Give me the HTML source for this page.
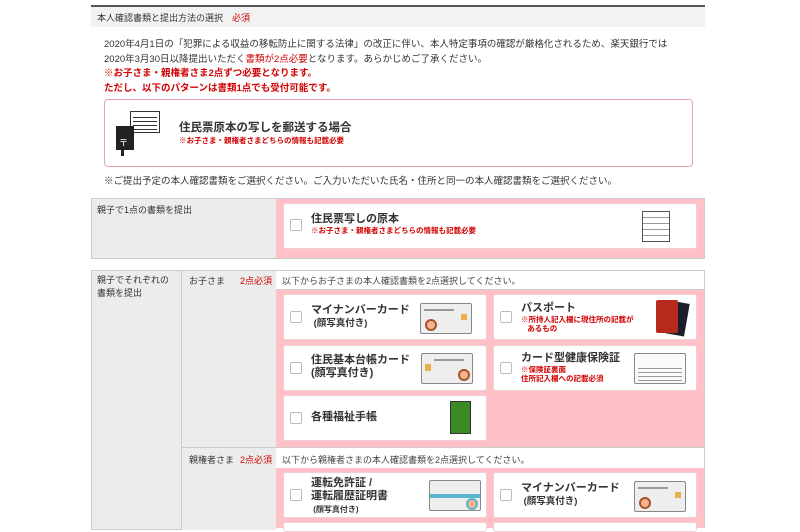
<!DOCTYPE html>
<html><head><meta charset="utf-8"><style>
*{margin:0;padding:0;box-sizing:border-box}
body{width:800px;height:527px;overflow:hidden;background:#fff;font-family:"Liberation Sans","Noto Sans CJK JP",sans-serif;color:#333;position:relative}
.a{position:absolute;white-space:nowrap}
.r{color:#d10000}
.card{position:absolute;background:#fff;border-radius:3px;border:1px solid #f0d0d4}
.cb{position:absolute;left:6px;width:12px;height:12px;border:1px solid #bbb;border-radius:2px;background:#fff}
.t{position:absolute;font-size:11px;font-weight:bold;color:#333;line-height:13px}
.s{font-size:7.5px;color:#d10000;font-weight:bold;line-height:9px}
.gray{position:absolute;background:#ececec}
.pink{position:absolute;background:#ffc0c8}
.idc{position:absolute;width:52px;height:31px;background:#eee;border:1px solid #888;border-radius:2px;overflow:hidden}
.face{position:absolute;width:12px;height:12px;border-radius:50%;background:#f6b38e;border:2px solid #a5532d}
.ln{position:absolute;height:2px;background:#999}
</style></head><body>
<div class="a" style="left:91px;top:5px;width:614px;height:2px;background:#555"></div>
<div class="a" style="left:91px;top:7px;width:614px;height:20px;background:#f2f2f2"></div>
<div class="a" style="left:97px;top:11px;font-size:9px;color:#333">本人確認書類と提出方法の選択　<span class="r">必須</span></div>
<div class="a" style="left:104px;top:38px;font-size:9.5px;line-height:14.5px;color:#333">2020年4月1日の「犯罪による収益の移転防止に関する法律」の改正に伴い、本人特定事項の確認が厳格化されるため、楽天銀行では<br>2020年3月30日以降提出いただく<span class="r">書類が2点必要</span>となります。あらかじめご了承ください。<br><b class="r">※お子さま・親権者さま2点ずつ必要となります。</b><br><b class="r">ただし、以下のパターンは書類1点でも受付可能です。</b></div>
<div class="a" style="left:104px;top:99px;width:589px;height:68px;border:1px solid #e8a4a8;border-radius:4px"></div>
<div class="a" style="left:130px;top:111px;width:30px;height:22px;background:#fff;border:1px solid #333"></div>
<div class="a" style="left:133px;top:117px;width:24px;height:1px;background:#333;box-shadow:0 4px 0 #333,0 8px 0 #333,0 12px 0 #333"></div>
<div class="a" style="left:116px;top:126px;width:18px;height:24px;background:#222"></div>
<div class="a" style="left:121px;top:150px;width:3px;height:6px;background:#222"></div>
<div class="a" style="left:119px;top:136px;color:#fff;font-size:9px">〒</div>
<div class="a" style="left:179px;top:119px;font-size:11.5px;font-weight:bold">住民票原本の写しを郵送する場合</div>
<div class="a s" style="left:179px;top:136px">※お子さま・親権者さまどちらの情報も記載必要</div>
<div class="a" style="left:104px;top:173px;font-size:9.5px">※ご提出予定の本人確認書類をご選択ください。ご入力いただいた氏名・住所と同一の本人確認書類をご選択ください。</div>

<div class="gray" style="left:91px;top:198px;width:185px;height:61px;border:1px solid #ccc;border-right:none"></div>
<div class="pink" style="left:276px;top:198px;width:429px;height:61px;border:1px solid #ccc;border-left:none"></div>
<div class="a" style="left:97px;top:203px;font-size:9px">親子で1点の書類を提出</div>
<div class="card" style="left:283px;top:203px;width:414px;height:46px">
<div class="cb" style="top:15px"></div>
<div class="t" style="left:27px;top:9px">住民票写しの原本<div class="s">※お子さま・親権者さまどちらの情報も記載必要</div></div>
<div class="a" style="left:358px;top:7px;width:28px;height:31px;border:1px solid #555;background:repeating-linear-gradient(#fff 0 5px,#999 5px 6px)"></div>
</div>

<div class="gray" style="left:91px;top:270px;width:91px;height:260px;border:1px solid #ccc"></div>
<div class="gray" style="left:182px;top:270px;width:94px;height:260px;border-top:1px solid #ccc"></div>
<div class="a" style="left:97px;top:274px;font-size:9px;line-height:13px">親子でそれぞれの<br>書類を提出</div>
<div class="a" style="left:189px;top:274px;font-size:9px">お子さま</div>
<div class="a r" style="left:240px;top:274px;font-size:9px">2点必須</div>
<div class="a" style="left:276px;top:270px;width:429px;height:20px;background:#fff;border:1px solid #ccc;border-left:none"></div>
<div class="a" style="left:282px;top:274px;font-size:9px;color:#444">以下からお子さまの本人確認書類を2点選択してください。</div>
<div class="pink" style="left:276px;top:290px;width:429px;height:158px;border-right:1px solid #ccc"></div>
<div class="a" style="left:182px;top:447px;width:523px;height:1px;background:#ccc"></div>
<div class="a" style="left:189px;top:453px;font-size:9px">親権者さま</div>
<div class="a r" style="left:240px;top:453px;font-size:9px">2点必須</div>
<div class="a" style="left:276px;top:448px;width:429px;height:20px;background:#fff;border-right:1px solid #ccc"></div>
<div class="a" style="left:282px;top:453px;font-size:9px;color:#444">以下から親権者さまの本人確認書類を2点選択してください。</div>
<div class="pink" style="left:276px;top:468px;width:429px;height:60px;border-right:1px solid #ccc"></div>

<div class="card" style="left:283px;top:294px;width:204px;height:46px"><div class="cb" style="top:16px"></div>
<div class="t" style="left:27px;top:9px">マイナンバーカード<br><span style="font-size:9.5px">&nbsp;(顔写真付き)</span></div>
<div class="idc" style="left:136px;top:8px"><div class="ln" style="left:3px;top:5px;width:30px"></div><div class="face" style="left:4px;top:15px"></div><div class="a" style="left:40px;top:10px;width:6px;height:6px;background:#e8b04a"></div></div></div>
<div class="card" style="left:493px;top:294px;width:204px;height:46px"><div class="cb" style="top:16px"></div>
<div class="t" style="left:27px;top:7px">パスポート<div class="s">※所持人記入欄に現住所の記載が<br>&nbsp;&nbsp;&nbsp;あるもの</div></div>
<div class="a" style="left:173px;top:7px;width:20px;height:33px;background:#1c1f2a;transform:rotate(10deg)"></div>
<div class="a" style="left:162px;top:5px;width:22px;height:33px;background:#b52a1c;border-radius:2px"></div></div>
<div class="card" style="left:283px;top:345px;width:204px;height:46px"><div class="cb" style="top:16px"></div>
<div class="t" style="left:27px;top:8px">住民基本台帳カード<br>(顔写真付き)</div>
<div class="idc" style="left:137px;top:7px"><div class="ln" style="left:12px;top:5px;width:30px"></div><div class="a" style="left:3px;top:10px;width:6px;height:7px;background:#e8b04a"></div><div class="face" style="left:36px;top:15px"></div></div></div>
<div class="card" style="left:493px;top:345px;width:204px;height:46px"><div class="cb" style="top:16px"></div>
<div class="t" style="left:27px;top:6px">カード型健康保険証<div class="s">※保険証裏面<br>住所記入欄への記載必須</div></div>
<div class="idc" style="left:140px;top:7px;background:#fafafa"><div class="ln" style="left:3px;top:14px;width:44px;height:1px;box-shadow:0 4px 0 #999,0 8px 0 #999,0 12px 0 #999"></div></div></div>
<div class="card" style="left:283px;top:395px;width:204px;height:46px"><div class="cb" style="top:16px"></div>
<div class="t" style="left:27px;top:15px">各種福祉手帳</div>
<div class="a" style="left:166px;top:5px;width:21px;height:33px;background:#3a8a25;border:1px solid #333"></div></div>
<div class="card" style="left:283px;top:472px;width:204px;height:46px"><div class="cb" style="top:16px"></div>
<div class="t" style="left:27px;top:4px">運転免許証 /<br>運転履歴証明書<br><span style="font-size:8px">&nbsp;(顔写真付き)</span></div>
<div class="idc" style="left:145px;top:7px;background:linear-gradient(#eee 0 13px,#5ab6cf 13px 17px,#eee 17px)"><div class="face" style="left:36px;top:17px;border-color:#5ab6cf"></div></div></div>
<div class="card" style="left:493px;top:472px;width:204px;height:46px"><div class="cb" style="top:16px"></div>
<div class="t" style="left:27px;top:9px">マイナンバーカード<br><span style="font-size:9.5px">&nbsp;(顔写真付き)</span></div>
<div class="idc" style="left:140px;top:8px"><div class="ln" style="left:3px;top:5px;width:30px"></div><div class="face" style="left:4px;top:15px"></div><div class="a" style="left:40px;top:10px;width:6px;height:6px;background:#e8b04a"></div></div></div>
<div class="card" style="left:283px;top:522px;width:204px;height:10px"></div>
<div class="card" style="left:493px;top:522px;width:204px;height:10px"></div>
</body></html>
